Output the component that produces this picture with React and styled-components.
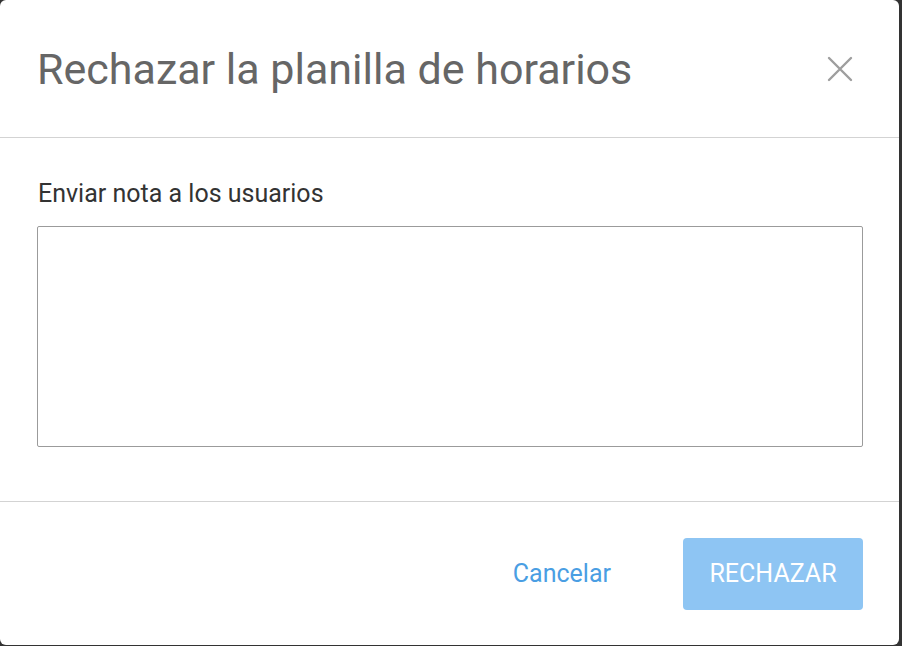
import React from "react";
import styled, { createGlobalStyle } from "styled-components";

const GlobalStyle = createGlobalStyle`
  html, body {
    margin: 0;
    padding: 0;
    background: #333333;
    font-family: Roboto, "Noto Sans", "Liberation Sans", sans-serif;
  }
`;

function App() {
  return (
    <>
      <GlobalStyle />
      <Modal>
        <Header>
          <Title>Rechazar la planilla de horarios</Title>
          <CloseButton aria-label="Cerrar">
            <svg width="26" height="26" viewBox="0 0 26 26">
              <path
                d="M2 2 L24 24 M24 2 L2 24"
                stroke="#9e9e9e"
                strokeWidth="2.4"
                strokeLinecap="round"
              />
            </svg>
          </CloseButton>
        </Header>
        <Body>
          <Label htmlFor="note">Enviar nota a los usuarios</Label>
          <NoteArea id="note" />
        </Body>
        <Footer>
          <TextButton>Cancelar</TextButton>
          <PrimaryButton disabled>RECHAZAR</PrimaryButton>
        </Footer>
      </Modal>
    </>
  );
}

export default App;

const Modal = styled.div`
  width: 899px;
  height: 645px;
  background: #ffffff;
  border-radius: 6px;
  display: flex;
  flex-direction: column;
  overflow: hidden;
`;

const Header = styled.div`
  height: 138px;
  flex-shrink: 0;
  box-sizing: border-box;
  display: flex;
  align-items: center;
  justify-content: space-between;
  padding: 0 46px 0 37px;
  border-bottom: 1px solid #d3d3d3;
`;

const Title = styled.h1`
  margin: 0;
  font-size: 43px;
  font-weight: 400;
  color: #666666;
`;

const CloseButton = styled.button`
  border: none;
  background: none;
  padding: 0;
  width: 26px;
  height: 26px;
  cursor: pointer;
  display: flex;
`;

const Body = styled.div`
  height: 364px;
  flex-shrink: 0;
  box-sizing: border-box;
  padding: 41px 36px 0 37px;
  border-bottom: 1px solid #d3d3d3;
  display: flex;
  flex-direction: column;
`;

const Label = styled.label`
  font-size: 25px;
  color: #333333;
  margin-left: 1px;
  margin-bottom: 18px;
`;

const NoteArea = styled.textarea`
  height: 221px;
  box-sizing: border-box;
  border: 1px solid #9b9b9b;
  border-radius: 2px;
  resize: none;
  outline: none;
  font-family: inherit;
  font-size: 20px;
`;

const Footer = styled.div`
  flex: 1;
  display: flex;
  align-items: center;
  justify-content: flex-end;
  gap: 72px;
  padding: 0 36px 0 0;
`;

const TextButton = styled.button`
  border: none;
  background: none;
  padding: 0;
  font-family: inherit;
  font-size: 25px;
  color: #4a9ee3;
  cursor: pointer;
`;

const PrimaryButton = styled.button`
  width: 180px;
  height: 72px;
  border: none;
  border-radius: 4px;
  background: #8ec5f3;
  color: #ffffff;
  font-family: inherit;
  font-size: 25px;
  cursor: default;
`;
